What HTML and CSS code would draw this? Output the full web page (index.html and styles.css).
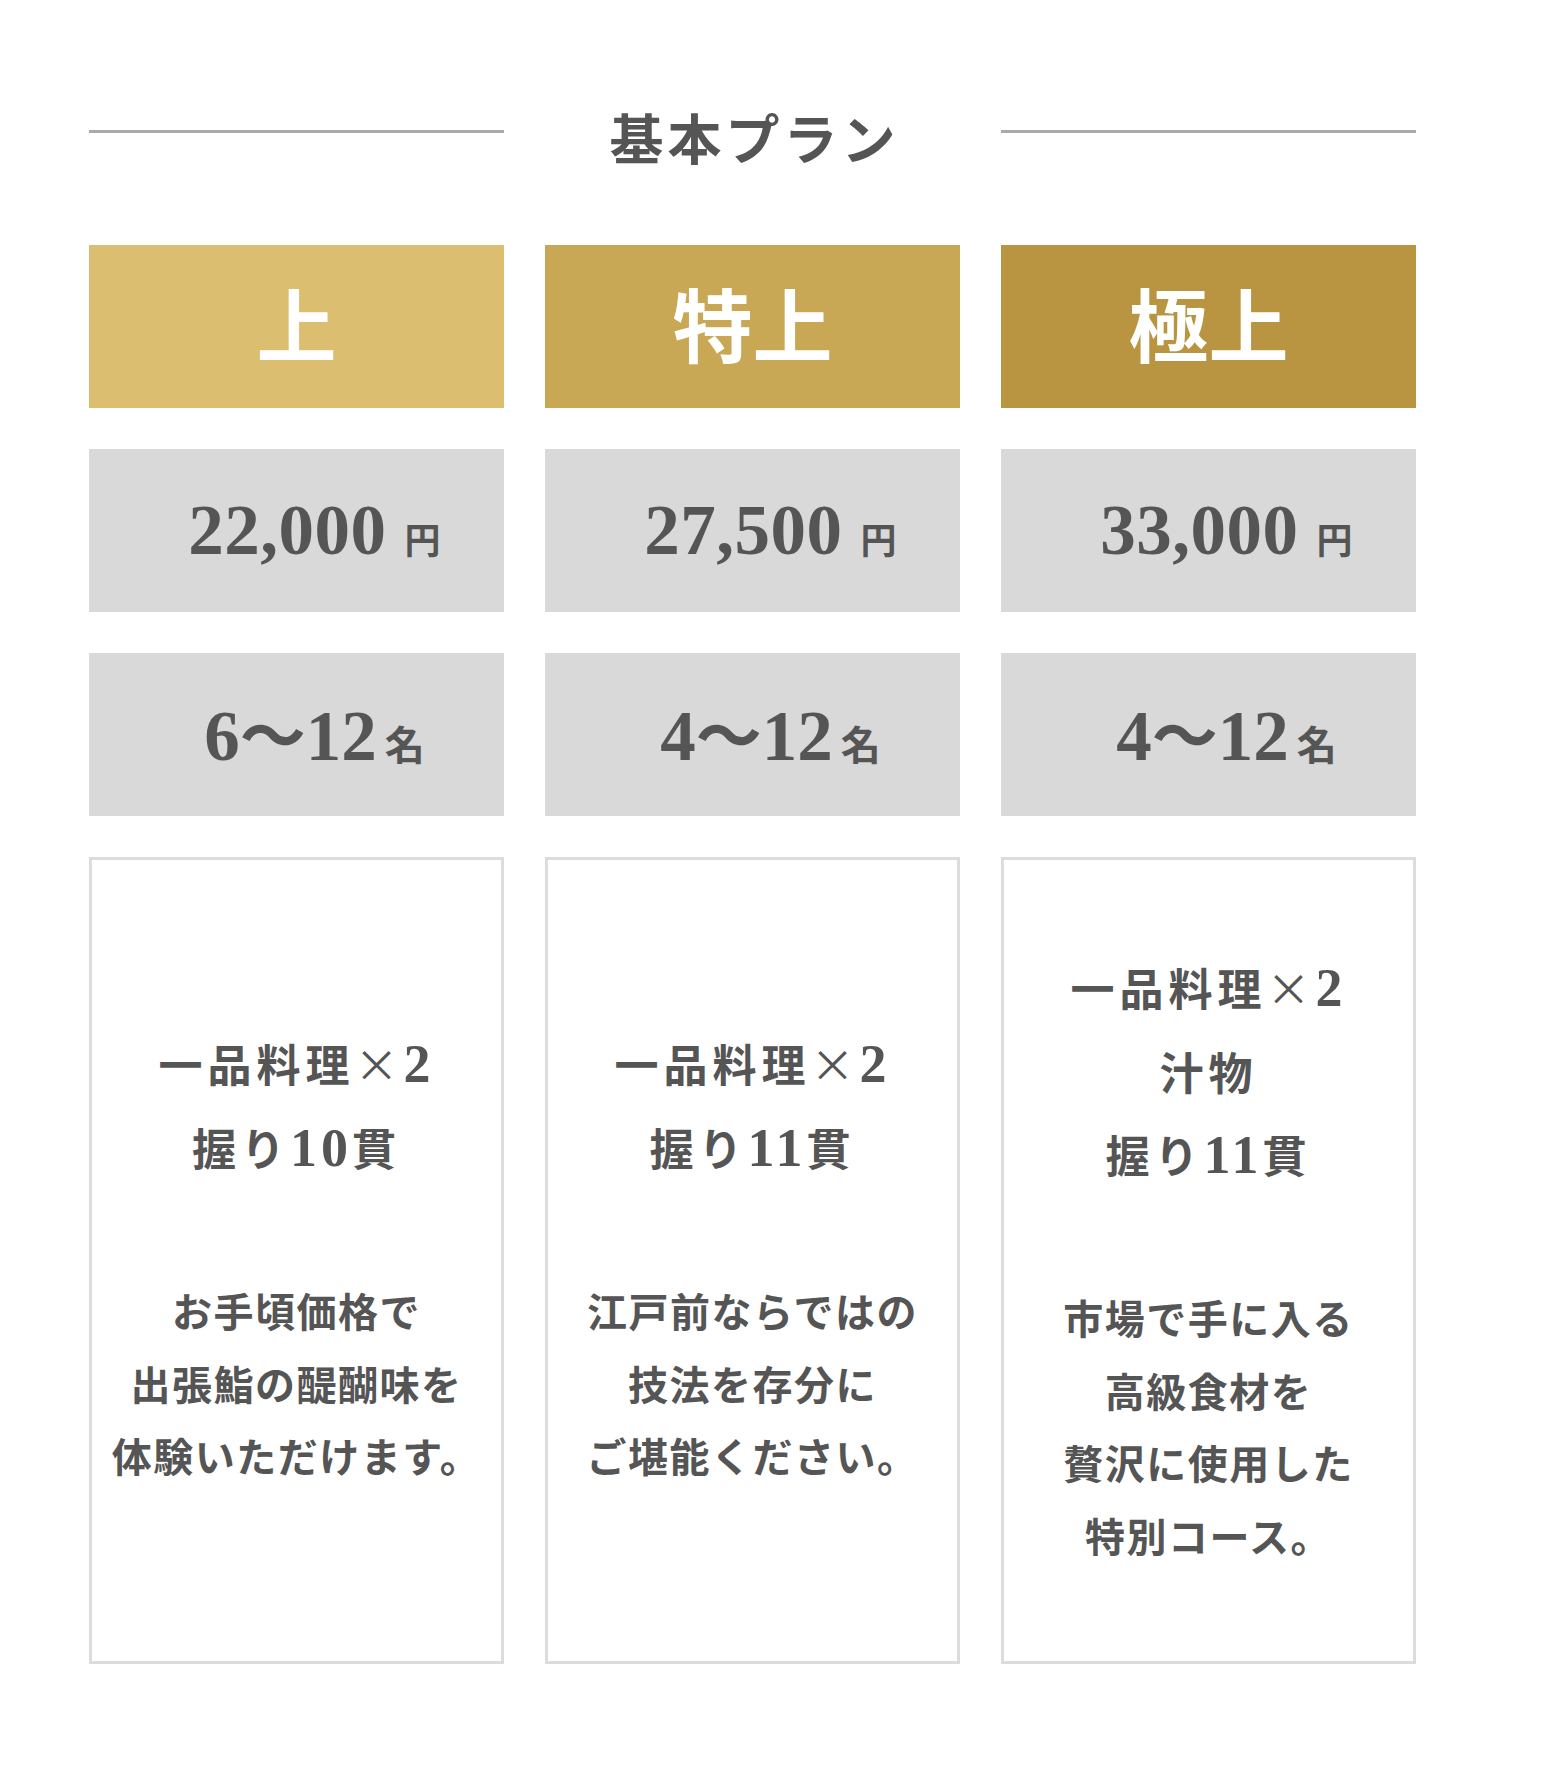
FILE: index.html
```html
<!DOCTYPE html>
<html lang="ja">
<head>
<meta charset="utf-8">
<title>基本プラン</title>
<link rel="stylesheet" href="styles.css">
</head>
<body>
<main class="page">
  <section class="plans">
    <div class="title-row">
      <span class="rule"></span>
      <h2 class="title">基本プラン</h2>
      <span class="rule"></span>
    </div>
    <div class="grid">
      <div class="name gold1">上</div>
      <div class="name gold2">特上</div>
      <div class="name gold3">極上</div>

      <div class="cell"><p class="val"><span class="num price">22,000</span><span class="yen">円</span></p></div>
      <div class="cell"><p class="val"><span class="num price">27,500</span><span class="yen">円</span></p></div>
      <div class="cell"><p class="val"><span class="num price">33,000</span><span class="yen">円</span></p></div>

      <div class="cell"><p class="val cap"><span class="num">6</span><span class="tilde">〜</span><span class="num">12</span><span class="mei">名</span></p></div>
      <div class="cell"><p class="val cap"><span class="num">4</span><span class="tilde">〜</span><span class="num">12</span><span class="mei">名</span></p></div>
      <div class="cell"><p class="val cap"><span class="num">4</span><span class="tilde">〜</span><span class="num">12</span><span class="mei">名</span></p></div>

      <div class="desc">
        <div class="menu">
          <p>一品料理<span class="x">×</span><span class="d">2</span></p>
          <p>握り<span class="d">10</span>貫</p>
        </div>
        <div class="text">
          <p>お手頃価格で</p>
          <p>出張鮨の醍醐味を</p>
          <p>体験いただけます。</p>
        </div>
      </div>
      <div class="desc">
        <div class="menu">
          <p>一品料理<span class="x">×</span><span class="d">2</span></p>
          <p>握り<span class="d">11</span>貫</p>
        </div>
        <div class="text">
          <p>江戸前ならではの</p>
          <p>技法を存分に</p>
          <p>ご堪能ください。</p>
        </div>
      </div>
      <div class="desc">
        <div class="menu">
          <p>一品料理<span class="x">×</span><span class="d">2</span></p>
          <p>汁物</p>
          <p>握り<span class="d">11</span>貫</p>
        </div>
        <div class="text">
          <p>市場で手に入る</p>
          <p>高級食材を</p>
          <p>贅沢に使用した</p>
          <p>特別コース。</p>
        </div>
      </div>
    </div>
  </section>
</main>
</body>
</html>
```

FILE: styles.css
```css
html, body {
  margin: 0;
  background: #ffffff;
}

body {
  font-family: "Noto Sans CJK JP", sans-serif;
  color: #555555;
}

.page {
  padding: 98px 0 120px 89px;
}

.title-row {
  display: grid;
  grid-template-columns: repeat(3, 415px);
  column-gap: 41px;
  align-items: center;
  height: 78px;
}

.rule {
  display: block;
  height: 3px;
  background: #aaaaaa;
  margin-bottom: 12px;
}

.title {
  margin: 0;
  font-size: 54px;
  font-weight: 700;
  line-height: 78px;
  letter-spacing: 4px;
  padding-left: 4px;
  text-align: center;
  color: #555555;
}

.grid {
  margin-top: 69px;
  display: grid;
  grid-template-columns: repeat(3, 415px);
  grid-template-rows: 163px 163px 163px auto;
  gap: 41px 41px;
}

.name {
  display: flex;
  align-items: center;
  justify-content: center;
  padding-bottom: 12px;
  box-sizing: border-box;
  color: #ffffff;
  font-size: 80px;
  font-weight: 700;
  line-height: 1;
}

.gold1 { background: #dbbe6f; }
.gold2 { background: #c8a755; }
.gold3 { background: #b99541; }

.cell {
  background: #d9d9d9;
  display: flex;
  align-items: center;
  justify-content: center;
  padding-left: 36px;
}

.val {
  margin: 0;
  line-height: 1;
  white-space: nowrap;
}

.num {
  font-family: "Liberation Serif", serif;
  font-size: 71px;
  font-weight: 700;
}

.num.price {
  letter-spacing: 0.5px;
}

.yen {
  font-size: 36px;
  font-weight: 700;
  margin-left: 18px;
}

.tilde {
  font-size: 66px;
  font-weight: 700;
}

.mei {
  font-size: 40px;
  font-weight: 700;
  margin-left: 8px;
}

.desc {
  border: 3px solid #dcdcdc;
  padding: 86px 8px 90px;
  display: flex;
  flex-direction: column;
  align-items: center;
}

.menu {
  min-height: 244px;
  display: flex;
  flex-direction: column;
  justify-content: flex-end;
  font-size: 44px;
  font-weight: 700;
  line-height: 83px;
  letter-spacing: 5px;
  text-align: center;
}

.menu p,
.text p {
  margin: 0;
}

.x {
  font-weight: 400;
}

.d {
  font-family: "Liberation Serif", serif;
  font-size: 54px;
  font-weight: 700;
  letter-spacing: 4px;
}

.text {
  margin-top: 84px;
  font-size: 40px;
  font-weight: 700;
  line-height: 72.5px;
  letter-spacing: 1.5px;
  text-align: center;
}
```
